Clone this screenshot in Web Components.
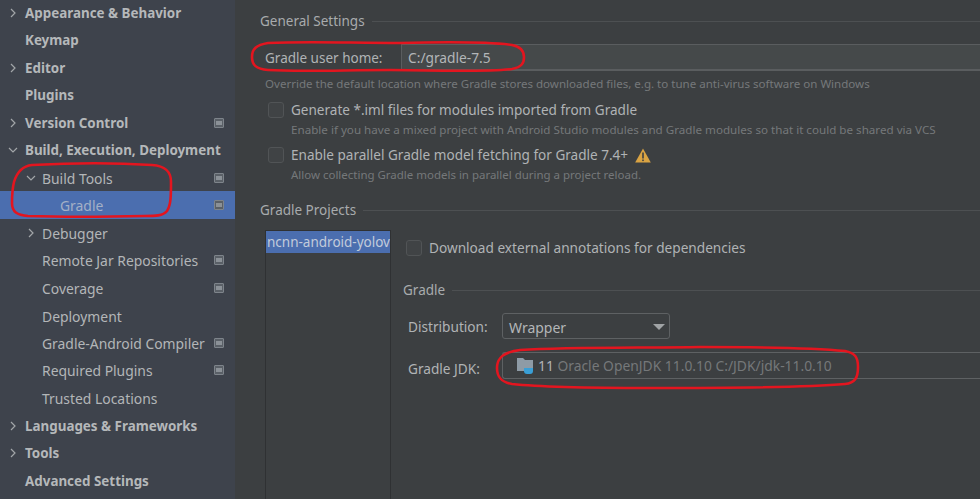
<!DOCTYPE html>
<html><head><meta charset="utf-8"><style>
html,body{margin:0;padding:0;background:#3c3f41;overflow:hidden}
body{width:980px;height:499px;font-family:"Noto Sans","Open Sans",sans-serif}
</style></head><body>
<settings-app>
<nav-tree slot="nav">
<nav-row short bold arrow="r">Appearance &amp; Behavior</nav-row>
<nav-row bold>Keymap</nav-row>
<nav-row short bold arrow="r">Editor</nav-row>
<nav-row bold>Plugins</nav-row>
<nav-row short bold arrow="r" badge>Version Control</nav-row>
<nav-row bold arrow="d">Build, Execution, Deployment</nav-row>
<nav-row short level="1" arrow="d" badge>Build Tools</nav-row>
<nav-row level="2" selected badge>Gradle</nav-row>
<nav-row short level="1" arrow="r">Debugger</nav-row>
<nav-row level="1" badge>Remote Jar Repositories</nav-row>
<nav-row level="1" badge>Coverage</nav-row>
<nav-row short level="1">Deployment</nav-row>
<nav-row short level="1" badge>Gradle-Android Compiler</nav-row>
<nav-row level="1" badge>Required Plugins</nav-row>
<nav-row level="1">Trusted Locations</nav-row>
<nav-row short bold arrow="r">Languages &amp; Frameworks</nav-row>
<nav-row bold arrow="r">Tools</nav-row>
<nav-row bold>Advanced Settings</nav-row>
</nav-tree>
<gradle-pane slot="main"></gradle-pane>
</settings-app>
<script>
function def(name,css,html){
  customElements.define(name,class extends HTMLElement{
    connectedCallback(){
      if(this.shadowRoot)return;
      const s=this.attachShadow({mode:'open'});
      s.innerHTML='<style>'+css+'</style>'+(typeof html==='function'?html(this):html);
    }
  });
}
const badge='<svg width="10" height="10" viewBox="0 0 10 10"><rect x="0.5" y="0.5" width="9" height="9" rx="0.5" fill="#5a6067" stroke="#7e848b"/><rect x="2" y="3" width="6" height="4" fill="#8b9197"/></svg>';
const arrows={
 r:'<svg width="10" height="10" viewBox="0 0 10 10"><path d="M3 1l4 4-4 4" fill="none" stroke="#a2a6a9" stroke-width="1.2"/></svg>',
 d:'<svg width="10" height="10" viewBox="0 0 10 10"><path d="M1 3l4 4 4-4" fill="none" stroke="#a2a6a9" stroke-width="1.2"/></svg>'
};
def('settings-app',
 ':host{display:flex;width:980px;height:499px;position:relative;overflow:hidden}'+
 '.side{width:235px;flex:none;background:#3e434c}.main{flex:1;min-width:0}'+
 'svg{position:absolute;left:0;top:0;pointer-events:none}',
 `<div class="side"><slot name="nav"></slot></div><div class="main"><slot name="main"></slot></div>
 <svg width="980" height="499" fill="none" stroke="#e3151f" stroke-width="2.6">
  <path d="M268 43C310 41 350 43 400 43C440 42 490 42 512 45C522 47 524 52 524 57C524 63 522 67 512 69C490 72 440 71 390 70C345 70 300 72 268 70C256 69 252 65 252 57C252 49 256 45 268 43Z"/>
  <path d="M32 165C70 163 120 163 152 165C166 166 171 172 171 182C171 195 171 205 167 211C163 216 155 216 145 216C100 217 60 217 28 216C17 215 12 212 12 203C12 195 12 190 14 182C17 172 22 166 32 165Z"/>
  <path d="M520 350C570 347 640 348 700 347C760 347 815 348 845 351C855 353 858 357 858 367C858 378 855 383 845 384C800 388 720 388 650 388C590 388 540 387 512 384C501 382 497 377 497 368C497 358 503 352 520 350Z"/>
 </svg>`);
def('nav-tree',':host{display:block;margin-top:-1px}','<slot></slot>');
def('nav-row',
 ':host{display:block;height:28px;line-height:28px;font-size:13.9px;color:#b3b6b8;white-space:nowrap;position:relative}'+
 ':host([short]){height:27px}'+
 ':host([level]){line-height:30px}'+
 ':host([bold]){font-size:13.4px;font-weight:700;padding-left:25px;color:#b5b8ba}'+
 ':host([level="1"]){padding-left:42px}:host([level="2"]){padding-left:60px;color:#a4b0c6}'+
 ':host([selected]){background:#4b6eaf}'+
 '.a{position:absolute;top:9px;display:flex}'+
 ':host([bold]) .a{left:8px}:host([level="1"]) .a{left:26px}'+
 '.b{position:absolute;left:214px;top:9px;display:flex}',
 h=>{const a=h.getAttribute('arrow');return (a?'<span class="a">'+arrows[a]+'</span>':'')+'<slot></slot>'+(h.hasAttribute('badge')?'<span class="b">'+badge+'</span>':'')});
def('group-title',
 ':host{display:flex;align-items:center;gap:7px;font-size:13.5px;color:#a8abad;line-height:18px}'+
 'i{flex:1;height:1px;background:#4d5052}',
 '<slot></slot><i></i>');
def('text-field',
 ':host{display:flex;align-items:center;flex:1;height:27px;box-sizing:border-box;background:#45494a;border:1px solid #5a5d5f;border-right:0;border-bottom-width:2px;padding-left:6px;font-size:13.75px;color:#b3b6b8}',
 '<slot></slot>');
def('check-box',
 ':host{display:flex;align-items:center;gap:7px;font-size:13.55px;color:#b0b3b5;line-height:18px}'+
 'b{flex:none;box-sizing:border-box;width:16px;height:16px;border:1px solid #515456;border-radius:3px;background:#404345}',
 '<b></b><slot></slot>');
def('hint-text',':host{display:block;font-size:11.55px;line-height:16px;color:#75787a;white-space:nowrap}','<slot></slot>');
def('select-box',
 ':host{display:flex;align-items:center;justify-content:space-between;box-sizing:border-box;height:26px;width:168px;border:1px solid #5e6163;border-radius:3px;background:#3c3f41;padding:2px 4px 0 6px;font-size:14px;color:#b3b6b8}'+
 'i{width:0;height:0;border:6px solid transparent;border-top:6px solid #a0a3a5;border-bottom:0}',
 '<slot></slot><i></i>');
def('jdk-box',
 ':host{display:flex;align-items:center;box-sizing:border-box;height:27px;flex:1;border:1px solid #5e6163;border-right:0;border-radius:3px 0 0 3px;padding-left:14px;font-size:13.85px;color:#75787a;gap:4px;white-space:nowrap}'+
 'strong{font-weight:400;color:#b0b3b5}',
 `<svg width="17" height="18" viewBox="0 0 17 18"><path d="M0 1h6l2 2h8v11H0z" fill="#8e9ba6"/><path d="M7 11h9v3a3 3 0 0 1-3 3h-3a3 3 0 0 1-3-3z" fill="#3a9fd6"/></svg><span><strong>11</strong> <slot></slot></span>`);
def('gradle-pane',
 `:host{display:block;padding:12px 0 0 25px;color:#b0b3b5;font-size:13.5px}
 .row{display:flex;align-items:center}
 .home{margin-top:14px}.home label{width:141px;flex:none;padding-left:5px;box-sizing:border-box}
 .projects{display:flex;margin-top:11px;height:300px}
 .list{width:126px;flex:none;box-sizing:border-box;border-left:1px solid #2f3133;border-right:1px solid #2f3133;border-top:1px solid #2f3133;height:300px;margin-left:5px;overflow:hidden}
 .sel{background:#4b6eaf;color:#c2cbdb;height:22px;line-height:22px;padding-left:1px;width:124px;white-space:nowrap;overflow:hidden}
 .right{flex:1;min-width:0;padding-left:12px}
 .lab{width:99px;flex:none;padding-left:5px;box-sizing:border-box;font-size:13.65px}`,
 `<group-title>General Settings</group-title>
 <div class="row home"><label>Gradle user home:</label><text-field>C:/gradle-7.5</text-field></div>
 <hint-text style="margin:5px 0 0 5px">Override the default location where Gradle stores downloaded files, e.g. to tune anti-virus software on Windows</hint-text>
 <check-box style="margin:9px 0 0 8px">Generate *.iml files for modules imported from Gradle</check-box>
 <hint-text style="margin-top:3px;padding-left:31px;font-size:11.63px">Enable if you have a mixed project with Android Studio modules and Gradle modules so that it could be shared via VCS</hint-text>
 <check-box style="margin:8px 0 0 8px"><span class="row" style="gap:7px">Enable parallel Gradle model fetching for Gradle 7.4+
   <svg width="16" height="15" viewBox="0 0 16 15"><path d="M8 0.5L15.8 14.5H0.2z" fill="#d9a343"/><rect x="7.2" y="4.5" width="1.6" height="6" fill="#3c3f41"/><rect x="7.2" y="11.5" width="1.6" height="1.6" fill="#3c3f41"/></svg></span></check-box>
 <hint-text style="margin-top:3px;padding-left:31px;font-size:11.48px">Allow collecting Gradle models in parallel during a project reload.</hint-text>
 <group-title style="margin-top:18px">Gradle Projects</group-title>
 <div class="projects">
  <div class="list"><div class="sel">ncnn-android-yolov</div></div>
  <div class="right">
   <check-box style="margin-top:9px;margin-left:3px;font-size:13.65px">Download external annotations for dependencies</check-box>
   <group-title style="margin-top:24px">Gradle</group-title>
   <div class="row" style="margin-top:14px"><span class="lab">Distribution:</span><select-box>Wrapper</select-box></div>
   <div class="row" style="margin-top:13px"><span class="lab" style="padding-top:6px">Gradle JDK:</span><jdk-box>Oracle OpenJDK 11.0.10 C:/JDK/jdk-11.0.10</jdk-box></div>
  </div>
 </div>`);
</script>
</body></html>
